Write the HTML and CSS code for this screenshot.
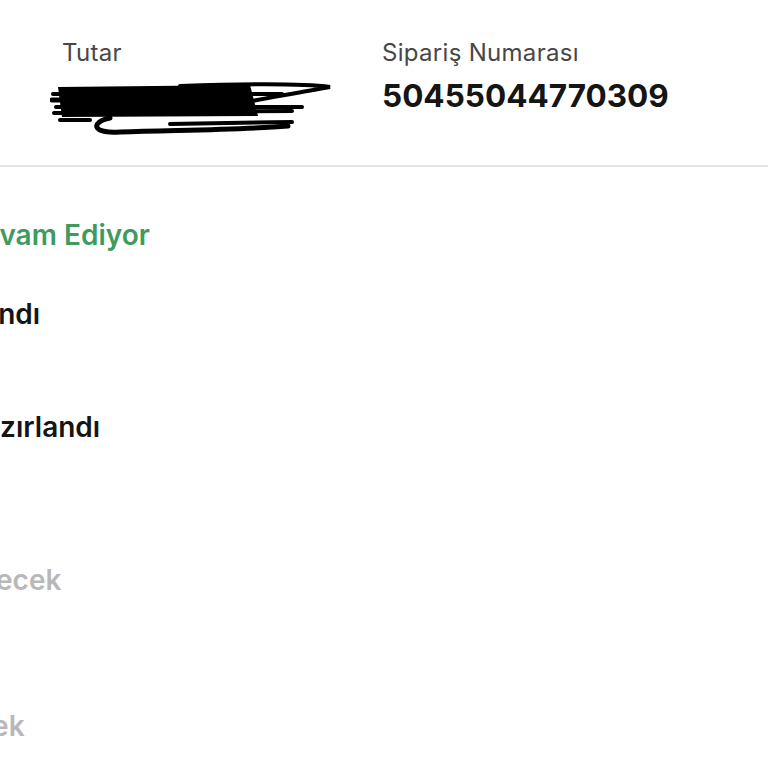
FILE: index.html
```html
<!DOCTYPE html>
<html lang="tr">
<head>
    <meta charset="UTF-8">
    <meta name="viewport" content="width=device-width, initial-scale=1.0">
    <title>Sipariş Detayı</title>
    <link rel="stylesheet" href="styles.css">
</head>
<body>
    <div class="order-summary">
        <div class="summary-item">
            <div class="summary-label">Tutar</div>
            <!-- amount hidden by hand -->
            <svg class="scribble" width="290" height="60" viewBox="0 0 290 60">
                <path d="M8 7 L200 5 L208 36 L12 37 Z" fill="#000"/>
                <g fill="none" stroke="#000" stroke-linecap="round">
                    <path d="M130 6 C190 4 250 3 280 7 C250 12 220 18 196 22" stroke-width="4"/>
                    <path d="M3 14 L232 14" stroke-width="4"/>
                    <path d="M2 20 L60 20" stroke-width="5"/>
                    <path d="M6 27 L252 27" stroke-width="4"/>
                    <path d="M4 33 L242 31" stroke-width="4"/>
                    <path d="M10 40 L40 40" stroke-width="4"/>
                    <path d="M60 38 C40 42 42 54 70 52 C130 50 190 50 238 46" stroke-width="5"/>
                    <path d="M120 44 L242 42" stroke-width="4"/>
                </g>
            </svg>
        </div>
        <div class="summary-item">
            <div class="summary-label">Sipariş Numarası</div>
            <div class="summary-value">50455044770309</div>
        </div>
    </div>

    <ul class="steps">
        <li class="step active">Siparişiniz Devam Ediyor</li>
        <li class="step done">Siparişiniz Alındı</li>
        <li class="step done step-long">Siparişiniz Hazırlandı</li>
        <li class="step pending">Kargoya Verilecek</li>
        <li class="step pending">Teslim Edilecek</li>
    </ul>
</body>
</html>
```

FILE: styles.css
```css
body {
    font-family: Inter, Lato, sans-serif;
    margin: 0;
    color: #151515;
    background: #fff;
    overflow: hidden;
}
.order-summary {
    display: grid;
    grid-template-columns: 320px 1fr;
    padding: 39px 0 0 62px;
    height: 126px;
    border-bottom: 2px solid #e4e4e4;
}
.summary-label {
    font-size: 24px;
    letter-spacing: 0.3px;
    line-height: 28px;
    color: #474747;
}
.summary-value {
    font-size: 31.5px;
    font-weight: 700;
    line-height: 38px;
    margin-top: 10px;
}
.scribble {
    display: block;
    margin: 13px 0 0 -12px;
}
.steps {
    list-style: none;
    margin: 51px 0 0 -185px;
    padding: 0;
}
.step {
    font-size: 28px;
    font-weight: 600;
    line-height: 34px;
    height: 79px;
    white-space: nowrap;
}
.active {
    color: #3f9a5e;
}
.done {
    height: 113px;
}
.step-long {
    height: 153px;
}
.pending {
    color: #b8b8b8;
    height: 146px;
}
```
